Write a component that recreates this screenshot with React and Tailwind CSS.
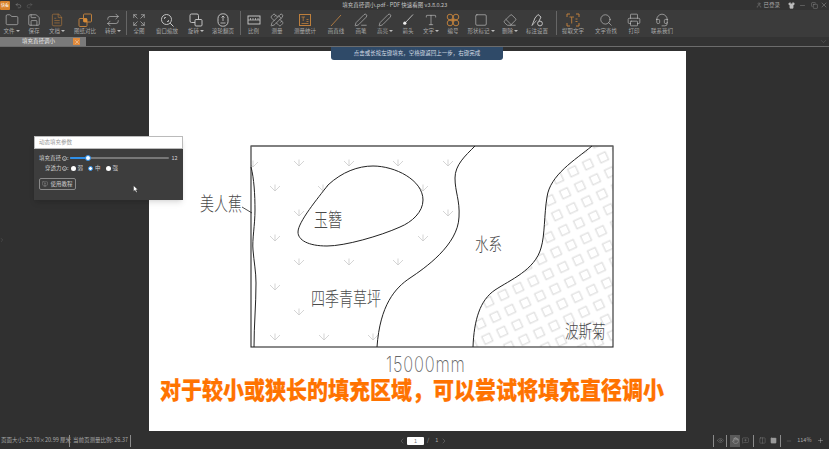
import {
  Folder, Save, FileText, Repeat, Expand, Search, PencilRuler, Pen, PenLine,
  Type, Square, Eraser, Printer, Headset, Undo2, Redo2, User, Shirt, Minus, X, Copy,
  ChevronDown, ChevronLeft, ChevronRight, Eye, Hand, MessageSquarePlus, Columns2, Plus, MonitorPlay,
} from "lucide-react";

const CJK = { fontFamily: '"Noto Sans CJK SC", "Noto Sans", sans-serif' };

// 自绘图标（图标库里没有的）
const ORANGE = "#bd7f3c";
const icons = {
  compare: (
    <>
      <rect x="5.5" y="1" width="8" height="8" rx="1" fill="none" stroke={ORANGE} />
      <rect x="1" y="5.5" width="8" height="8" rx="1" fill="none" stroke={ORANGE} />
      <rect x="5.5" y="5.5" width="3.5" height="3.5" fill="#d98c35" />
    </>
  ),
  zoomWindow: (
    <>
      <circle cx="6.5" cy="6.5" r="5" fill="none" stroke="#cfcfcf" strokeWidth="0.9" />
      <path d="M10.2 10.2 L13.5 13.5" stroke="#cfcfcf" />
      <path d="M4.5 6 V4.5 H6 M7 8.5 H8.5 V7" fill="none" stroke="#cfcfcf" strokeWidth="0.8" />
    </>
  ),
  rotate: (
    <>
      <rect x="1" y="1" width="8.5" height="8.5" rx="1.5" fill="none" stroke="#cfcfcf" strokeWidth="0.9" />
      <rect x="6" y="6.5" width="7" height="6.5" rx="1" fill="#3b3b3b" stroke="#cfcfcf" strokeWidth="0.9" />
    </>
  ),
  mouse: (
    <>
      <rect x="2" y="0.8" width="10" height="12.4" rx="4.5" fill="none" stroke="#cfcfcf" strokeWidth="0.9" />
      <path d="M7 3 V8 M5.5 4.5 L7 3 L8.5 4.5" fill="none" stroke="#cfcfcf" strokeWidth="0.8" />
      <path d="M4.5 10 H9.5" stroke="#cfcfcf" strokeWidth="0.8" />
    </>
  ),
  ruler: (
    <>
      <rect x="1" y="3" width="12" height="8" fill="none" stroke="#cfcfcf" strokeWidth="0.9" />
      <path d="M1 7 H13 M3.5 7 V5 M6 7 V5 M8.5 7 V5 M11 7 V5" fill="none" stroke="#cfcfcf" strokeWidth="0.7" />
    </>
  ),
  stats: (
    <>
      <rect x="1.5" y="1.5" width="11" height="11" fill="none" stroke={ORANGE} />
      <path d="M3.5 4 H7 M5.2 4 V8 M3.5 10.5 H10.5 M8.5 6.5 H10.5 M8.5 8.5 H10.5" fill="none" stroke={ORANGE} strokeWidth="0.8" />
    </>
  ),
  line: <path d="M2 13 L12 2" stroke="#b97f42" strokeWidth="0.9" />,
  arrow: (
    <>
      <path d="M12 1.5 L4.5 9.5" stroke="#d8d8d8" strokeWidth="0.8" />
      <circle cx="3.8" cy="10.2" r="1.6" fill="#eee" />
    </>
  ),
  number: (
    <>
      {[[4, 4], [10, 4], [4, 10], [10, 10]].map(([x, y]) => (
        <circle key={`${x}${y}`} cx={x} cy={y} r="2.8" fill="none" stroke={ORANGE} strokeWidth="1" />
      ))}
      <circle cx="7" cy="7" r="1.5" fill={ORANGE} />
    </>
  ),
  markSet: (
    <>
      <path d="M2 12.5 L5 5 L8 1.5 L11 4 L9 8" fill="none" stroke="#cfcfcf" strokeWidth="0.9" />
      <path d="M2 12.5 L6.5 7.5" stroke="#cfcfcf" strokeWidth="0.7" />
      <circle cx="10" cy="10.5" r="2.4" fill="none" stroke="#cfcfcf" strokeWidth="0.9" />
    </>
  ),
  extract: (
    <>
      <path d="M1 4 V1 H4 M10 1 H13 V4 M13 10 V13 H10 M4 13 H1 V10" fill="none" stroke={ORANGE} />
      <path d="M3.5 4 H8 M5.7 4 V10.5 M9.5 6 H11.5 M9.5 8.5 H11.5" fill="none" stroke={ORANGE} strokeWidth="0.9" />
    </>
  ),
};

// 工具栏：w 决定每个按钮中心的位置
const tools = [
  { w: "w-[23px]", label: "文件", Icon: Folder, caret: true },
  { w: "w-[22px]", label: "保存", Icon: Save },
  { w: "w-[24px]", label: "文档", Icon: FileText, caret: true, orange: true },
  { w: "w-[32px]", label: "图纸对比", draw: "compare" },
  { w: "w-[24px]", label: "转换", Icon: Repeat, caret: true },
  { sep: true, w: "w-[3px]" },
  { w: "w-[22px]", label: "全图", Icon: Expand },
  { w: "w-[34px]", label: "窗口缩放", draw: "zoomWindow" },
  { w: "w-[24px]", label: "旋转", draw: "rotate", caret: true },
  { w: "w-[30px]", label: "滚轮翻页", draw: "mouse" },
  { sep: true, w: "w-[4px]" },
  { w: "w-[23px]", label: "比例", draw: "ruler" },
  { w: "w-[24px]", label: "测量", Icon: PencilRuler },
  { w: "w-[32px]", label: "测量统计", draw: "stats" },
  { w: "w-[30px]", label: "画直线", draw: "line" },
  { w: "w-[20px]", label: "画笔", Icon: PenLine },
  { w: "w-[28px]", label: "高亮", Icon: Pen, caret: true },
  { w: "w-[18px]", label: "箭头", draw: "arrow" },
  { w: "w-[28px]", label: "文字", Icon: Type, caret: true },
  { w: "w-[16px]", label: "编号", draw: "number" },
  { w: "w-[40px]", label: "形状标记", Icon: Square, caret: true },
  { w: "w-[18px]", label: "删除", Icon: Eraser, caret: true },
  { w: "w-[36px]", label: "标注设置", draw: "markSet" },
  { sep: true, w: "w-[2px]" },
  { w: "w-[32px]", label: "提取文字", draw: "extract" },
  { w: "w-[34px]", label: "文字查找", Icon: Search },
  { w: "w-[22px]", label: "打印", Icon: Printer },
  { w: "w-[34px]", label: "联系我们", Icon: Headset },
];

function Tool({ t }) {
  if (t.sep) {
    return (
      <div className={`${t.w} flex justify-center shrink-0`}>
        <div className="w-px h-[24px] mt-[1px] bg-[#666666]" />
      </div>
    );
  }
  const color = t.orange ? "text-[#bd7f3c]" : "text-[#cfcfcf]";
  return (
    <div className={`${t.w} shrink-0 flex flex-col items-center`}>
      <div className={`h-[17px] pt-[3px] flex items-center justify-center ${color}`}>
        {t.Icon && <t.Icon size={14} strokeWidth={1} />}
        {t.draw && (
          <svg width="14" height="14" viewBox="0 0 14 14">
            {icons[t.draw]}
          </svg>
        )}
      </div>
      <div className="flex items-center whitespace-nowrap text-[5.5px] leading-[8px] text-[#a8a8a8]">
        {t.label}
        {t.caret && <span className="ml-px border-x-[2px] border-t-[2px] border-x-transparent border-t-[#bbb]" />}
      </div>
    </div>
  );
}

function Sep() {
  return <div className="w-px h-[12px] bg-[#8a8a8a]" />;
}

const arrows = [
  [253, 164], [299, 163], [349, 163], [398, 163], [448, 163],
  [275, 188], [323, 188], [423, 188],
  [299, 213], [448, 213],
  [275, 238], [423, 238],
  [299, 262], [349, 262], [398, 262],
  [275, 287], [299, 312],
  [275, 337], [324, 337], [373, 337],
];

// 手写标注：字形比例偏高，所以纵向拉伸
const notes = [
  { x: 200, y: 211, size: 14, text: "美人蕉" },
  { x: 314, y: 227, size: 14, text: "玉簪" },
  { x: 311, y: 306, size: 14, text: "四季青草坪" },
  { x: 475, y: 251, size: 13.5, text: "水系" },
  { x: 565, y: 338, size: 13.5, text: "波斯菊" },
];

function Drawing() {
  const river2 = "M592 146 C575 160 550 175 547 197 C544 215 545 235 541 248 C535 270 510 280 495 290 C480 300 474 320 473 347";
  return (
    <svg className="block" width="537" height="380" viewBox="149 51 537 380" style={CJK}>
      <defs>
        <pattern id="squares" width="16.5" height="16.5" patternUnits="userSpaceOnUse" patternTransform="rotate(-25 480 300)">
          <rect x="4" y="4" width="8.5" height="8.5" fill="none" stroke="#d2d2d2" strokeWidth="0.9" />
        </pattern>
        <clipPath id="frame">
          <rect x="251" y="146" width="362" height="201" />
        </clipPath>
      </defs>
      <path d={`${river2} L613 347 L613 146 Z`} fill="url(#squares)" />
      {arrows.map(([x, y]) => (
        <path
          key={`${x}-${y}`}
          d={`M${x} ${y - 3.5} V${y + 3} M${x - 5} ${y - 2} L${x} ${y + 3} L${x + 5} ${y - 2}`}
          fill="none"
          stroke="#cacaca"
          strokeWidth="0.8"
          clipPath="url(#frame)"
        />
      ))}
      <rect x="251" y="146" width="362" height="201" fill="none" stroke="#2a2a2a" strokeWidth="1.1" />
      <path d="M251 146 H613" stroke="#777" strokeWidth="1.2" />
      <path d="M251 167 C254 178 255 195 255 210 C255 225 252 240 253 250 C254 262 256 272 256 283 C256 305 254 325 254 347" fill="none" stroke="#222" strokeWidth="1" />
      <path d="M242 207 L252 213" fill="none" stroke="#222" strokeWidth="0.8" />
      <path d="M328 185 C342 172 358 166 373 166 C395 166 423 180 423 200 C423 212 412 222 400 227 C380 236 345 246 327 246 C308 246 298 240 298 232 C298 222 318 198 328 185 Z" fill="none" stroke="#222" strokeWidth="1" />
      <path d="M475 146 C465 156 455 165 455 178 C455 192 460 200 459 217 C458 245 425 268 410 278 C395 288 380 305 377 347" fill="none" stroke="#222" strokeWidth="1" />
      <path d={river2} fill="none" stroke="#222" strokeWidth="1" />

      {notes.map((n) => (
        <text key={n.text} transform={`translate(${n.x} ${n.y}) scale(1 1.35)`} fontSize={n.size} fontWeight="300" fill="#4a4a4a">
          {n.text}
        </text>
      ))}
      <text
        transform="translate(386 372) scale(0.82 1.05)"
        fontSize="20"
        fontWeight="200"
        fill="#666"
        letterSpacing="1"
        style={{ fontFamily: '"Inter", sans-serif' }}
      >
        15000mm
      </text>
    </svg>
  );
}

function FillPanel() {
  return (
    <div className="absolute left-[34px] top-[89px] w-[149px] h-[64px] bg-[#3d3d3d] shadow-md text-[5.5px] text-[#d0d0d0] whitespace-nowrap">
      <div className="h-[13px] bg-white border border-[#bbb] flex items-center pl-[4px] text-[#999]">动态填充参数</div>
      <div className="flex items-center h-[10px] mt-[4px] pl-[5px]">
        <span className="w-[22px] shrink-0">填充直径</span>
        <span className="ml-[1px] w-[5px] h-[5px] shrink-0 rounded-full border border-[#aaa] text-[4px] leading-[4px] text-center">?</span>
        <span>:</span>
        <div className="relative ml-[1px] w-[99px] h-[2px] shrink-0 bg-[#777] rounded-full">
          <div className="h-full w-[18px] bg-[#2f8fe8] rounded-full" />
          <div className="absolute left-[15px] -top-[2px] w-[6px] h-[6px] rounded-full bg-white border border-[#2f8fe8]" />
        </div>
        <span className="ml-[3px]">12</span>
      </div>
      <div className="flex items-center h-[10px] pl-[11px]">
        <span className="w-[16px] shrink-0">穿透力</span>
        <span className="ml-[1px] w-[5px] h-[5px] shrink-0 rounded-full border border-[#aaa] text-[4px] leading-[4px] text-center">?</span>
        <span>:</span>
        <span className="ml-[2px] w-[5px] h-[5px] rounded-full bg-white" />
        <span className="ml-[2px]">弱</span>
        <span className="ml-[5px] w-[5px] h-[5px] rounded-full bg-white border-[1.5px] border-[#2f8fe8]" />
        <span className="ml-[2px]">中</span>
        <span className="ml-[5px] w-[5px] h-[5px] rounded-full bg-white" />
        <span className="ml-[2px]">强</span>
      </div>
      <div className="ml-[5px] mt-[5px] w-[37px] h-[12px] rounded-[2px] border border-[#8a8a8a] flex items-center justify-center gap-[2px]">
        <MonitorPlay size={6} strokeWidth={1} />
        <span>使用教程</span>
      </div>
      <svg className="absolute left-[99px] top-[49px]" width="6" height="8" viewBox="0 0 6 8">
        <path d="M0.5 0.5 V6.5 L2 5.2 L3.2 7.6 L4.2 7 L3 4.8 H5 Z" fill="#fff" stroke="#222" strokeWidth="0.4" />
      </svg>
    </div>
  );
}

export default function App() {
  return (
    <div className="w-[829px] h-[449px] overflow-hidden flex flex-col bg-[#303030]" style={CJK}>
      {/* 标题栏 */}
      <div className="h-[10px] shrink-0 flex items-center bg-[#333333] text-[#c4c4c4]">
        <div className="w-[10px] h-[9px] bg-[#d9822b] rounded-[1px] text-[4px] leading-[9px] text-center text-white">快看</div>
        <Undo2 className="ml-[5px]" size={7} strokeWidth={1} />
        <Redo2 className="ml-[4px] text-[#888]" size={7} strokeWidth={1} />
        <div className="flex-1 text-center text-[5.5px] leading-[10px] whitespace-nowrap">填充直径调小.pdf - PDF 快速看图 v3.8.0.23</div>
        <div className="flex items-center mr-[1px]">
          <User size={6} strokeWidth={1} />
          <span className="ml-[1px] text-[5.5px] text-[#aaa]">已登录</span>
          <Shirt className="ml-[8px]" size={7} fill="#bbb" strokeWidth={1} />
          <Minus className="ml-[4px]" size={7} strokeWidth={1} />
          <Copy className="ml-[5px]" size={7} strokeWidth={1} />
          <X className="ml-[2px]" size={8} strokeWidth={1} />
        </div>
      </div>

      {/* 工具栏 */}
      <div className="h-[27px] shrink-0 flex items-start bg-[#3b3b3b]">
        {tools.map((t, i) => (
          <Tool key={i} t={t} />
        ))}
      </div>

      {/* 标签栏 */}
      <div className="h-[10px] shrink-0 flex items-stretch bg-[#333333] border-b border-[#6c6c6c]">
        <div className="w-[86px] bg-[#7a7a7a] flex items-center relative text-[5.5px] text-[#e8e8e8]">
          <span className="ml-[22px]">填充直径调小</span>
          <span className="absolute left-[73px] top-[1px] w-[7px] h-[7px] bg-[#e08a3c] flex items-center justify-center">
            <X size={6} strokeWidth={1.5} color="#fff" />
          </span>
        </div>
        <ChevronDown className="ml-auto mr-[1px] text-[#777]" size={9} strokeWidth={1} />
      </div>

      {/* 图纸区域 */}
      <div className="flex-1 relative pl-[149px] pt-[4px] bg-[#303030]">
        <div className="relative w-[537px] h-[380px] bg-white">
          <Drawing />
          <div className="absolute left-[11px] top-[327px] scale-y-[1.15] text-[21px] leading-[22px] font-black text-[#ff7300] whitespace-nowrap [-webkit-text-stroke:0.2px_#ff7300]">
            对于较小或狭长的填充区域，可以尝试将填充直径调小
          </div>
        </div>
        <div className="absolute left-[331px] top-0 w-[172px] h-[13px] bg-[#2f4a68] rounded-b-[3px] flex items-center justify-center text-[5.5px] text-[#d5dde6]">
          点击或长按左键填充，空格键返回上一步，右键完成
        </div>
        <FillPanel />
        <ChevronRight className="absolute left-[-1px] top-[190px] text-[#888]" size={6} strokeWidth={1} />
      </div>

      {/* 状态栏 */}
      <div className="h-[17px] shrink-0 flex items-center bg-[#303030] text-[5.5px] text-[#a8a8a8] whitespace-nowrap">
        <span className="ml-[1px] w-[68px] shrink-0">页面大小: 29.70×20.99 厘米</span>
        <Sep />
        <span className="ml-[3px] w-[57px] shrink-0">当前页测量比例: 26.37</span>
        <Sep />
        <ChevronLeft className="ml-[267px]" size={8} strokeWidth={1} />
        <div className="ml-[1px] w-[17px] h-[8px] bg-white rounded-[1px] text-center text-[#777] leading-[8px]">1</div>
        <span className="ml-[3px]">/</span>
        <span className="ml-[6px]">1</span>
        <ChevronRight className="ml-[2px]" size={8} strokeWidth={1} />
        <div className="ml-auto"><Sep /></div>
        <Eye className="ml-[2.5px]" size={7} strokeWidth={1} />
        <div className="ml-[2.5px]"><Sep /></div>
        <div className="ml-[3px] w-[10px] h-[12px] bg-[#5a5a5a] flex items-center justify-center text-[#ddd]">
          <Hand size={7} strokeWidth={1} />
        </div>
        <MessageSquarePlus className="ml-[2px]" size={7} strokeWidth={1} />
        <div className="ml-[3.5px]"><Sep /></div>
        <Columns2 className="ml-[5px]" size={7} strokeWidth={1} />
        <Square className="ml-[4px]" size={7} strokeWidth={1} fill="#999" />
        <div className="ml-[3.5px]"><Sep /></div>
        <Minus className="ml-[5px]" size={6} strokeWidth={1} />
        <span className="ml-[5px]">114%</span>
        <Plus className="ml-[5.5px] mr-[5px] text-[#ddd]" size={7} strokeWidth={1.2} />
      </div>
    </div>
  );
}
